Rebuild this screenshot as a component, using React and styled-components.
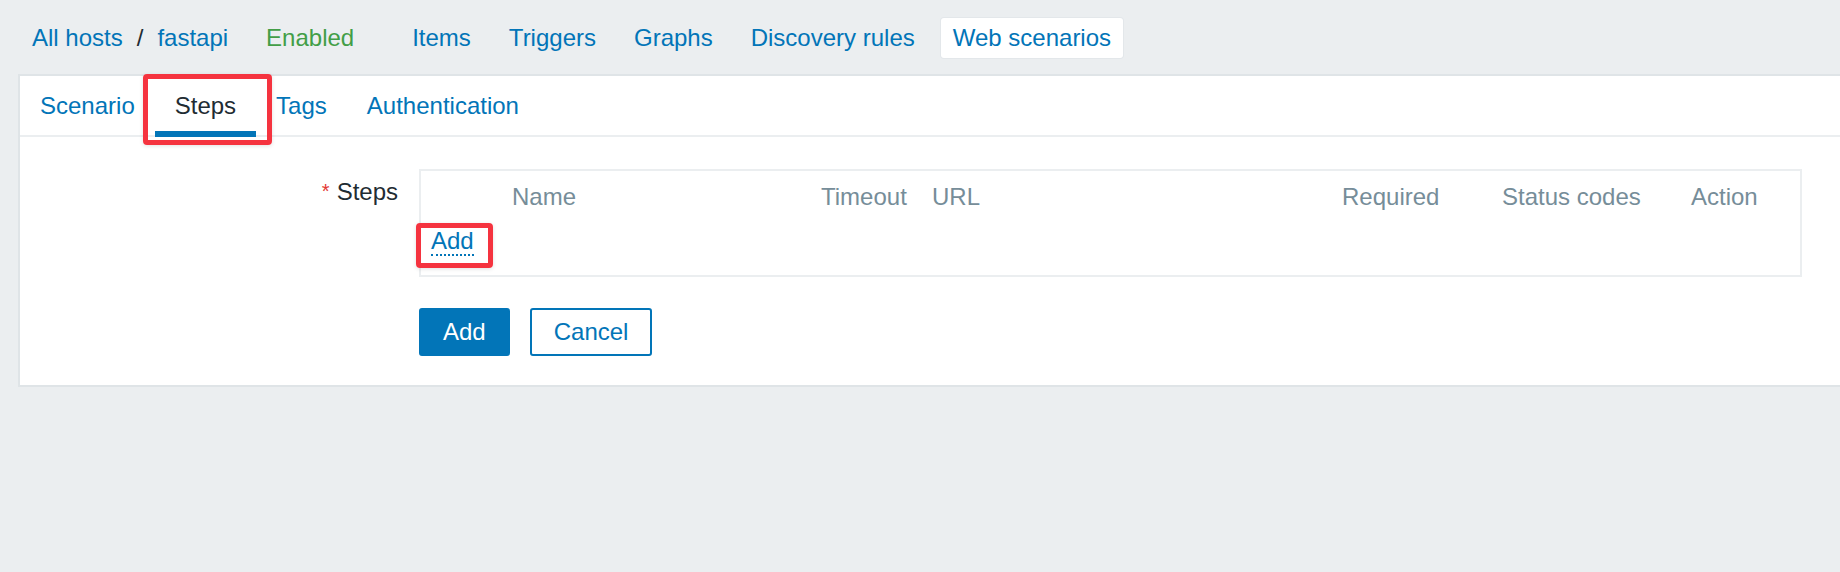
import styled, { createGlobalStyle } from "styled-components";

const GlobalStyle = createGlobalStyle`
  html, body {
    margin: 0;
    background: #ebeef0;
    font-family: "Liberation Sans", Arial, sans-serif;
  }
`;

const navLinks = ["Items", "Triggers", "Graphs", "Discovery rules", "Web scenarios"];
const tabs = ["Scenario", "Steps", "Tags", "Authentication"];
const columns = ["", "Name", "Timeout", "URL", "Required", "Status codes", "Action"];

export default function App() {
  return (
    <>
      <GlobalStyle />
      <Header>
        <Crumb>All hosts</Crumb>
        <Separator>/</Separator>
        <Crumb>fastapi</Crumb>
        <Status>Enabled</Status>
        <Nav>
          {navLinks.map((link) => (
            <NavItem key={link} $selected={link === "Web scenarios"}>
              {link}
            </NavItem>
          ))}
        </Nav>
      </Header>

      <Panel>
        <TabBar>
          {tabs.map((tab) => (
            <Tab key={tab} $active={tab === "Steps"}>
              {tab}
              {tab === "Steps" && <Highlight $inset="-2px -16px -14px -12px" />}
            </Tab>
          ))}
        </TabBar>

        <FormBody>
          <FormRow>
            <Label>
              <Asterisk>*</Asterisk>Steps
            </Label>
            <StepsTable>
              <HeaderRow>
                {columns.map((col, i) => (
                  <HeaderCell key={i}>{col}</HeaderCell>
                ))}
              </HeaderRow>
              <AddRow>
                <AddLink>
                  Add
                  <Highlight $inset="-4px -19px -14px -15px" />
                </AddLink>
              </AddRow>
            </StepsTable>
          </FormRow>

          <ButtonRow>
            <span />
            <Buttons>
              <Button $primary>Add</Button>
              <Button>Cancel</Button>
            </Buttons>
          </ButtonRow>
        </FormBody>
      </Panel>
    </>
  );
}

const Header = styled.header`
  display: flex;
  align-items: center;
  height: 40px;
  padding: 18px 0 0 32px;
  margin-bottom: 16px;
  font-size: 24px;
  line-height: 40px;
`;

const Crumb = styled.a`
  color: #0275b8;
  cursor: pointer;
`;

const Separator = styled.span`
  margin: 0 14px;
  color: #1f2c33;
`;

const Status = styled.span`
  margin-left: 38px;
  color: #429e47;
`;

const Nav = styled.nav`
  display: flex;
  gap: 14px;
  margin-left: 46px;
`;

const NavItem = styled.a`
  padding: 0 12px;
  height: 40px;
  color: #0275b8;
  border-radius: 3px;
  background: ${(p) => (p.$selected ? "#ffffff" : "transparent")};
  box-shadow: ${(p) => (p.$selected ? "0 0 0 1px #e3e7ea" : "none")};
  cursor: pointer;
`;

const Panel = styled.main`
  margin-left: 18px;
  background: #ffffff;
  border: 2px solid #dfe4e7;
  border-right: none;
  padding-bottom: 29px;
`;

const TabBar = styled.ul`
  display: flex;
  margin: 0;
  padding: 0;
  list-style: none;
  border-bottom: 2px solid #ebeef0;
`;

const Tab = styled.li`
  position: relative;
  padding: 16px 20px 12px;
  margin-bottom: -2px;
  font-size: 24px;
  line-height: 27px;
  color: ${(p) => (p.$active ? "#1f2c33" : "#0275b8")};
  border-bottom: 6px solid ${(p) => (p.$active ? "#0275b8" : "transparent")};
  cursor: pointer;
`;

const Highlight = styled.span`
  position: absolute;
  inset: ${(p) => p.$inset};
  border: 5px solid #f5333f;
  border-radius: 4px;
  box-shadow: 0 1px 4px rgba(0, 0, 0, 0.12);
  pointer-events: none;
`;

const FormBody = styled.div`
  padding-top: 32px;
`;

const FormRow = styled.div`
  display: grid;
  grid-template-columns: 378px 1fr;
  column-gap: 21px;
  padding-right: 38px;
`;

const ButtonRow = styled(FormRow)`
  margin-top: 31px;
`;

const Label = styled.label`
  padding-top: 9px;
  text-align: right;
  font-size: 24px;
  line-height: 27px;
  color: #1f2c33;
`;

const Asterisk = styled.span`
  margin-right: 7px;
  font-size: 20px;
  vertical-align: top;
  color: #e33734;
`;

const StepsTable = styled.div`
  border: 2px solid #ebeef0;
  padding: 12px 0 19px;
`;

const HeaderRow = styled.div`
  display: grid;
  grid-template-columns: 91px 309px 111px 410px 160px 189px 1fr;
  font-size: 24px;
  line-height: 27px;
  color: #768d99;
`;

const HeaderCell = styled.div`
  white-space: nowrap;
`;

const AddRow = styled.div`
  margin-top: 17px;
  padding-left: 10px;
`;

const AddLink = styled.a`
  position: relative;
  display: inline-block;
  font-size: 24px;
  line-height: 27px;
  color: #0275b8;
  border-bottom: 2px dotted #0275b8;
  cursor: pointer;
`;

const Buttons = styled.div`
  display: flex;
  gap: 20px;
`;

const Button = styled.button`
  height: 48px;
  padding: 0 22px;
  font-family: inherit;
  font-size: 24px;
  border: 2px solid #0275b8;
  border-radius: 3px;
  background: ${(p) => (p.$primary ? "#0275b8" : "#ffffff")};
  color: ${(p) => (p.$primary ? "#ffffff" : "#0275b8")};
  cursor: pointer;
`;
